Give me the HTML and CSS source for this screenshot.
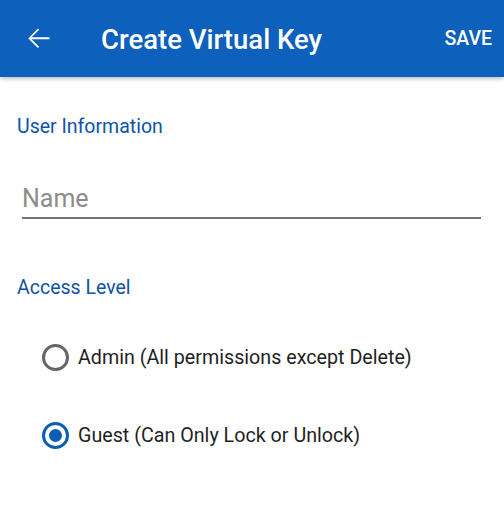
FILE: index.html
```html
<!DOCTYPE html>
<html>
<head>
<meta charset="utf-8">
<link rel="stylesheet" href="styles.css">
</head>
<body>
<header class="appbar">
  <button class="back" aria-label="Back">
    <svg width="24" height="24" viewBox="0 0 24 24"><path d="M20 11.15H6.95l5.5-5.5-0.9-0.9L4.6 12l6.95 6.95 0.9-0.9-5.5-5.5H20z" fill="#fff"/></svg>
  </button>
  <h1 class="title">Create Virtual Key</h1>
  <span class="save">SAVE</span>
</header>
<main class="content">
  <h2 class="section">User Information</h2>
  <div class="field"><span class="placeholder">Name</span></div>
  <h2 class="section access">Access Level</h2>
  <div class="radios">
    <label class="radio"><span class="circle"></span><span class="rlabel">Admin (All permissions except Delete)</span></label>
    <label class="radio checked"><span class="circle"></span><span class="rlabel">Guest (Can Only Lock or Unlock)</span></label>
  </div>
</main>
</body>
</html>
```
FILE: styles.css
```css
html, body { margin: 0; padding: 0; background: #fff; }
body { font-family: Roboto, "Noto Sans", sans-serif; width: 504px; height: 517px; overflow: hidden; }
.appbar {
  height: 77px;
  background: #0d60bb;
  display: flex;
  align-items: center;
  color: #fff;
  box-shadow: 0 2px 4px rgba(0,0,0,0.25);
  position: relative;
}
.back {
  background: none; border: 0; padding: 0;
  margin-left: 22px; width: 33px; height: 33px;
  display: flex; align-items: center; justify-content: center;
}
.back svg { width: 33px; height: 33px; }
.title {
  margin: 0 0 0 46px;
  font-size: 27.5px;
  font-weight: 500;
  flex: 1;
  padding-top: 2px;
}
.save {
  font-size: 19.5px;
  font-weight: 500;
  margin-right: 12px;
}
.content { padding: 0 17px; }
.section {
  margin: 38px 0 0 0;
  font-size: 19.5px;
  font-weight: 400;
  color: #0d53a6;
  line-height: 24px;
}
.field {
  margin: 43px 6px 0 5px;
  border-bottom: 2px solid #757575;
  height: 35px;
}
.placeholder {
  font-size: 25px;
  color: #8c8c8c;
  line-height: 30px;
  display: block;
  padding-top: 2px;
}
.section.access { margin-top: 57px; }
.radios { display: flex; flex-direction: column; gap: 51px; margin-top: 44px; padding-left: 25px; }
.radio { display: flex; align-items: center; gap: 9px; height: 27px; }
.circle {
  width: 21px; height: 21px;
  border: 3px solid #666;
  border-radius: 50%;
  position: relative;
  flex: none;
}
.radio.checked .circle { border-color: #0d5cb5; }
.radio.checked .circle::after {
  content: ""; position: absolute;
  left: 4px; top: 4px; width: 13px; height: 13px;
  border-radius: 50%; background: #0d5cb5;
}
.rlabel { font-size: 19.7px; color: #1f1f1f; }
```
